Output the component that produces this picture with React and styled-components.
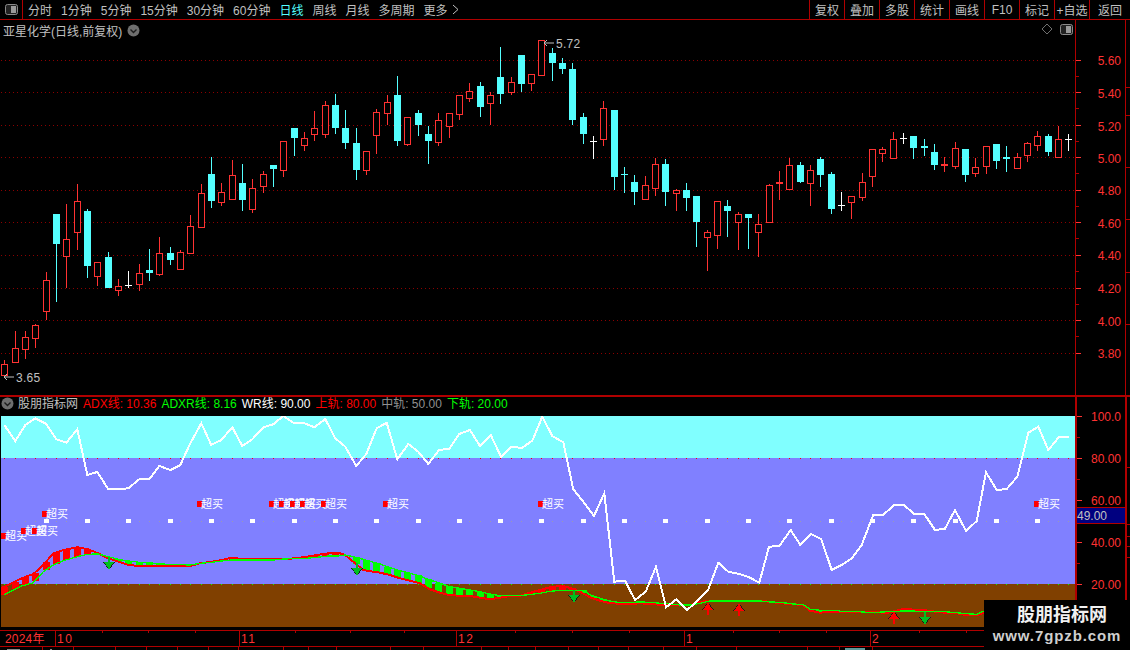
import React from 'react'
import styled, { createGlobalStyle } from 'styled-components'

const RED = '#ff3232'
const LINE = '#b00000'
const GRAY = '#c0c0c0'
const CYAN = '#54ffff'
const FONT = '"Liberation Sans", "Noto Sans CJK SC", sans-serif'

const GlobalStyle = createGlobalStyle`
  html, body { margin: 0; padding: 0; background: #000; }
  body { font-family: ${FONT}; overflow: hidden; }
`

const Page = styled.div`
  position: relative;
  width: 1130px;
  height: 650px;
  overflow: hidden;
  background: #000;
  color: ${GRAY};
  font-size: 12px;
`

/* top toolbar */
const Toolbar = styled.div`
  display: flex;
  align-items: stretch;
  height: 19px;
  border-bottom: 1px solid ${LINE};
`
const IconCell = styled.div`
  display: flex;
  align-items: center;
  justify-content: center;
  width: 22px;
  border-right: 1px solid ${LINE};
`
const Periods = styled.div`
  display: flex;
  align-items: center;
  gap: 9px;
  padding-left: 5px;
`
const Period = styled.span`
  display: flex;
  align-items: center;
  gap: 4px;
  color: ${(p) => (p.$active ? CYAN : GRAY)};
  white-space: nowrap;
`
const Actions = styled.div`
  display: flex;
  margin-left: auto;
`
const Action = styled.div`
  display: flex;
  align-items: center;
  justify-content: center;
  width: ${(p) => p.$w || 35}px;
  box-sizing: border-box;
  border-left: 1px solid ${LINE};
  white-space: nowrap;
`

/* panes */
const PricePane = styled.div`
  display: flex;
  height: 375px;
  border-bottom: 2px solid ${LINE};
`
const ChartCol = styled.div`
  position: relative;
  width: 1075px;
`
const PriceAxis = styled.div`
  width: 49px;
  border-left: 1px solid ${LINE};
  border-right: 1px solid ${LINE};
`
const LowerPane = styled.div`
  display: flex;
  height: 230px;
`
const IndicatorAxis = styled.div`
  width: 48px;
  border-left: 2px solid ${LINE};
  border-right: 2px solid ${LINE};
`
const Plot = styled.svg`
  display: block;
  font-family: ${FONT};
`
const TitleBar = styled.div`
  position: absolute;
  top: 1px;
  left: 3px;
  display: flex;
  align-items: center;
  gap: 5px;
  height: 18px;
  font-size: 12px;
`
const CornerTools = styled.div`
  position: absolute;
  top: 3px;
  right: 2px;
  display: flex;
  align-items: center;
  gap: 7px;
`
const LegendRow = styled.div`
  display: flex;
  align-items: flex-start;
  gap: 5px;
  height: 19px;
  padding-left: 1px;
  line-height: 15px;
  white-space: nowrap;
`
const LegendName = styled.span`
  margin-left: -1px;
`
const LegendItem = styled.span`
  color: ${(p) => p.$color};
`
const Watermark = styled.div`
  position: absolute;
  right: 0;
  bottom: 0;
  display: flex;
  flex-direction: column;
  align-items: center;
  width: 146px;
  height: 50px;
  padding-top: 4px;
  box-sizing: border-box;
  background: #000;
`
const MarkName = styled.div`
  margin-left: 10px;
  font-size: 18px;
  font-weight: 700;
  line-height: 22px;
  color: #f0f0f0;
`
const MarkUrl = styled.div`
  font-size: 15px;
  font-weight: 700;
  line-height: 20px;
  letter-spacing: 0.9px;
  color: #cfcfcf;
`

/* data: y values were read at 3x, so each block is scaled back to page px */
const rows = (oy, list) =>
  list.map(([k, hi, top, bot, lo]) => [k, oy + hi / 3, oy + top / 3, oy + bot / 3, oy + lo / 3])
const pts = (ox, oy, list) => list.map(([x, y]) => [ox + x / 3, oy + y / 3])
const candleX = (i) => Math.round(4.33 + 10.33 * i)

const CANDLES = [
  ...rows(140, [
    ['r', 660, 673, 704, 712], ['r', 573, 625, 665, 665], ['r', 573, 592, 626, 656], ['r', 552, 556, 593, 623],
    ['r', 396, 421, 512, 540], ['c', 222, 222, 312, 486], ['r', 192, 298, 347, 443], ['r', 132, 184, 275, 330],
    ['c', 207, 213, 378, 414], ['r', 366, 367, 407, 438], ['c', 336, 351, 444, 444], ['r', 418, 439, 449, 468],
    ['w', 393, 434, 434, 444], ['r', 372, 400, 431, 453], ['c', 327, 390, 399, 423], ['r', 291, 340, 401, 408],
    ['c', 321, 339, 360, 375], ['r', 330, 337, 386, 386], ['r', 225, 259, 338, 338], ['r', 132, 160, 260, 260],
    ['c', 51, 102, 183, 204], ['r', 129, 157, 185, 198], ['r', 60, 106, 176, 176], ['c', 72, 129, 180, 213],
    ['r', 117, 145, 206, 219], ['r', 94, 103, 137, 159], ['c', 75, 75, 87, 141],
  ]),
  ...rows(30, [
    ['r', 334, 334, 419, 441], ['c', 294, 294, 324, 378], ['r', 306, 325, 345, 363], ['r', 243, 295, 312, 333],
    ['r', 213, 226, 311, 324], ['c', 192, 225, 294, 312], ['c', 240, 294, 339, 357], ['c', 294, 339, 420, 450],
    ['r', 364, 364, 419, 435], ['r', 237, 247, 315, 372], ['r', 195, 217, 248, 285], ['c', 138, 195, 333, 348],
    ['r', 262, 262, 341, 348], ['c', 240, 249, 285, 318], ['c', 288, 312, 333, 402], ['r', 249, 271, 335, 348],
    ['r', 250, 250, 287, 324], ['r', 195, 195, 251, 270], ['r', 159, 184, 203, 216], ['c', 156, 168, 231, 261],
    ['r', 186, 196, 218, 285], ['c', 51, 141, 192, 222], ['r', 141, 157, 185, 195], ['c', 75, 75, 162, 186],
    ['r', 133, 133, 158, 183], ['r', 30, 31, 134, 138], ['c', 54, 69, 99, 153], ['c', 84, 99, 117, 132],
    ['c', 99, 117, 270, 285], ['c', 250, 261, 312, 342], ['w', 318, 334, 334, 387], ['r', 213, 235, 326, 348],
    ['c', 240, 240, 441, 480], ['c', 411, 433, 433, 489], ['c', 435, 456, 486, 525], ['r', 438, 466, 506, 506],
    ['r', 384, 403, 473, 498], ['c', 387, 402, 486, 528], ['r', 477, 481, 488, 543], ['c', 459, 480, 504, 543],
    ['c', 498, 498, 576, 651], ['r', 600, 607, 620, 723], ['r', 514, 514, 614, 657], ['c', 510, 528, 543, 621],
    ['r', 546, 553, 575, 660], ['c', 552, 552, 564, 657], ['r', 552, 583, 605, 681], ['r', 462, 466, 575, 575],
    ['R', 423, 457, 461, 510],
  ]),
  ...rows(120, [
    ['r', 114, 135, 206, 206], ['c', 126, 135, 186, 189], ['r', 135, 151, 188, 258], ['c', 111, 117, 165, 201],
    ['c', 156, 162, 267, 282], ['w', 216, 256, 256, 273], ['r', 229, 229, 245, 297], ['r', 159, 186, 231, 243],
    ['r', 87, 88, 167, 201], ['r', 81, 88, 98, 126], ['r', 36, 58, 113, 113], ['w', 39, 55, 55, 72],
    ['c', 48, 48, 84, 117], ['c', 57, 78, 83, 108], ['c', 72, 96, 135, 150], ['R', 112, 133, 137, 156],
    ['r', 66, 85, 137, 147], ['c', 87, 87, 165, 186], ['r', 114, 142, 158, 171], ['r', 79, 79, 137, 162],
    ['c', 72, 72, 123, 147], ['c', 78, 112, 116, 156], ['r', 99, 112, 143, 147], ['r', 66, 70, 104, 126],
    ['r', 33, 49, 74, 93], ['c', 42, 48, 96, 108], ['r', 18, 58, 110, 110], ['w', 42, 58, 58, 93],
  ]),
]

const PRICE_GRID = [
  [60, '5.60'], [92.5, '5.40'], [125.5, '5.20'], [157.5, '5.00'], [190, '4.80'],
  [222.5, '4.60'], [255, '4.40'], [288, '4.20'], [320.5, '4.00'], [353, '3.80'],
]

const WR = [
  ...pts(0, 380, [
    [13, 135], [46, 183], [76, 135], [106, 115], [139, 132], [169, 178], [199, 188], [232, 148], [262, 285],
    [292, 276], [325, 328], [355, 328], [385, 325], [418, 298], [448, 298], [478, 258], [511, 270], [541, 255],
    [571, 190], [604, 130], [634, 195], [664, 180], [697, 142], [727, 198], [757, 178], [790, 142], [820, 133],
    [850, 108], [880, 128], [910, 128], [943, 142], [976, 117], [1006, 175], [1036, 200], [1069, 258], [1099, 222],
  ]),
  ...pts(370, 410, [
    [20, 55], [50, 38], [82, 148], [115, 102], [145, 125], [175, 162], [207, 120], [238, 116], [268, 72], [300, 60],
    [330, 108], [362, 75], [393, 140], [425, 110], [455, 114], [487, 92], [517, 20], [547, 78], [580, 97], [610, 238],
    [642, 278], [672, 318], [703, 250],
  ]),
  ...pts(380, 500, [
    [703, 245], [735, 242], [765, 300], [797, 275], [828, 200], [858, 322], [889, 298], [922, 330], [952, 302],
    [985, 268], [1015, 188], [1045, 215], [1078, 222], [1108, 232], [1138, 248],
  ]),
  ...pts(760, 480, [
    [27, 200], [58, 198], [92, 150], [121, 195], [154, 162], [184, 178], [215, 270], [245, 255], [275, 235], [305, 195],
    [340, 104], [370, 104], [402, 76], [433, 76], [463, 102], [493, 102], [525, 150], [555, 146], [585, 90], [618, 153],
  ]),
  ...pts(960, 385, [
    [50, 408], [78, 262], [110, 315], [140, 312], [172, 275], [205, 143], [235, 125], [265, 195], [298, 155], [328, 155],
  ]),
]

const ADX = [
  ...pts(0, 500, [
    [3, 265], [35, 250], [65, 235], [100, 222], [130, 195], [160, 160], [190, 150], [232, 142], [262, 147], [295, 160],
    [325, 175], [355, 185], [385, 195], [418, 198], [570, 198], [600, 190], [635, 185], [665, 180], [695, 173], [727, 177],
    [850, 177], [885, 175], [920, 170], [950, 165], [985, 160], [1015, 158], [1035, 165], [1060, 185], [1090, 210], [1120, 215],
  ]),
  ...pts(380, 500, [
    [0, 218], [30, 225], [60, 235], [90, 242], [120, 250], [150, 268], [180, 278], [210, 286], [270, 288], [300, 293],
    [330, 298], [360, 293], [390, 288], [420, 287], [445, 280], [480, 270], [510, 262], [545, 257], [575, 265], [600, 275],
    [630, 292], [660, 302], [690, 310], [750, 312], [780, 310], [810, 312], [840, 314], [930, 316], [960, 305], [990, 303], [1140, 303],
  ]),
  ...pts(760, 480, [
    [30, 365], [60, 370], [100, 372], [130, 376], [150, 392], [180, 398], [215, 395], [300, 396], [385, 398], [430, 387],
    [495, 391], [540, 397], [590, 400], [620, 406], [650, 406], [672, 398],
  ]),
]

const ADXR = [
  ...pts(0, 500, [
    [12, 285], [35, 272], [65, 258], [100, 248], [130, 215], [160, 195], [190, 182], [232, 170], [262, 163], [295, 162],
    [325, 170], [355, 178], [385, 183], [418, 187], [448, 188], [480, 192], [570, 195], [600, 190], [635, 187], [665, 183],
    [695, 180], [820, 180], [850, 177], [920, 175], [950, 172], [985, 168], [1015, 168], [1035, 165], [1060, 170], [1090, 178], [1120, 187],
  ]),
  ...pts(380, 500, [
    [0, 192], [30, 203], [60, 212], [90, 220], [120, 228], [150, 240], [180, 250], [210, 260], [240, 265], [270, 270],
    [300, 275], [330, 282], [360, 287], [420, 287], [445, 284], [480, 280], [510, 274], [545, 271], [612, 271], [630, 285],
    [660, 295], [690, 303], [720, 308], [780, 306], [810, 307], [840, 310], [870, 312], [900, 315], [930, 315], [960, 310], [990, 303], [1140, 303],
  ]),
  ...pts(760, 480, [
    [30, 366], [60, 367], [100, 372], [130, 374], [150, 388], [180, 391], [230, 391], [245, 395], [300, 395], [330, 398],
    [385, 395], [430, 393], [495, 394], [540, 394], [590, 398], [620, 401], [650, 403], [672, 393],
  ]),
]

const yAt = (line, x) => {
  for (let i = 1; i < line.length; i++) {
    const [x0, y0] = line[i - 1]
    const [x1, y1] = line[i]
    if (x >= x0 && x <= x1) return y0 + ((y1 - y0) * (x - x0)) / Math.max(x1 - x0, 0.01)
  }
  return line[line.length - 1][1]
}

const OVERBOUGHT = [
  [42, 514], [1, 536], [21, 530.5], [32, 530.5], [197, 504], [269, 504], [279, 504], [290, 504],
  [300, 504], [321, 504], [383, 504], [538, 504], [1034, 504],
]
const DOWN_ARROWS = [[109, 557], [357, 563], [574, 590], [925, 612]]
const UP_ARROWS = [[708, 603], [739, 604], [894, 612]]

const MONTHS = [[57, '10'], [241, '11'], [458, '12'], [686, '1'], [872, '2']]
const DAY_TICKS = [102, 148, 195, 295, 350, 404, 515, 572, 629, 733, 779, 826, 919, 966]
const LOW_TICKS = [42, 73, 115, 146, 177, 208, 238, 283, 308, 336, 390, 423, 481, 508, 535, 568, 598, 628, 663, 696, 736, 807, 839, 872]
const UPPER_STRIP = [20, 30, 45, 57, 92, 125, 157, 190, 222, 255, 288, 320, 353]
const LOWER_STRIP = [423, 437, 458, 500, 532, 552, 569, 587]

const toPoints = (line) => line.map(([x, y]) => `${x.toFixed(1)},${y.toFixed(1)}`).join(' ')

function Candle({ data, i }) {
  const [kind, hi, top, bot, lo] = data
  const x = candleX(i)
  const color = kind === 'w' ? '#ffffff' : kind === 'c' ? CYAN : RED
  const y0 = Math.round(top)
  const y1 = Math.round(bot)
  const wick = <rect x={x} y={Math.round(hi)} width="1" height={Math.max(Math.round(lo) - Math.round(hi), 1)} fill={color} />
  const flat = y1 - y0 < 2
  return (
    <g>
      {wick}
      {flat || kind === 'R' ? (
        <rect x={x - 3} y={y0} width="7" height={Math.max(y1 - y0, 1)} fill={color} />
      ) : kind === 'c' ? (
        <rect x={x - 3} y={y0} width="7" height={y1 - y0} fill={color} />
      ) : (
        <rect x={x - 2.5} y={y0 + 0.5} width="6" height={y1 - y0} fill="#000" stroke={color} />
      )}
    </g>
  )
}

function SplitIcon() {
  return (
    <svg width="13" height="11" viewBox="0 0 13 11">
      <rect x="0.5" y="0.5" width="12" height="10" rx="2" fill="#222" stroke="#8a8a8a" />
      <rect x="6" y="2" width="5" height="7" fill="#9a9a9a" />
    </svg>
  )
}

function ChevronBadge() {
  return (
    <svg width="13" height="13" viewBox="0 0 13 13">
      <circle cx="6.5" cy="6.5" r="6" fill="#6e6e6e" />
      <path d="M3.5 5.5 L6.5 8.5 L9.5 5.5" fill="none" stroke="#1c1c1c" strokeWidth="1.4" />
    </svg>
  )
}

function ExtremeNote({ x, y, label }) {
  return (
    <g>
      <path d={`M${x + 11} ${y} H${x + 1} M${x + 4} ${y - 3} L${x + 1} ${y} L${x + 4} ${y + 3}`} fill="none" stroke={GRAY} />
      <text x={x + 13} y={y + 5} fontSize="12" fill={GRAY} letterSpacing="0.3">{label}</text>
    </g>
  )
}

function PriceChart() {
  return (
    <Plot width="1075" height="375" viewBox="0 20 1075 375">
      <g shapeRendering="crispEdges">
        {PRICE_GRID.map(([y]) => (
          <line key={y} x1="1" x2="1075" y1={Math.floor(y) + 0.5} y2={Math.floor(y) + 0.5} stroke="#8c0000" strokeDasharray="1 3" />
        ))}
        {CANDLES.map((c, i) => <Candle key={i} data={c} i={i} />)}
      </g>
      <ExtremeNote x={3} y={377} label="3.65" />
      <ExtremeNote x={543} y={43} label="5.72" />
    </Plot>
  )
}

function PriceScale() {
  return (
    <Plot width="49" height="375" viewBox="1076 20 49 375">
      {PRICE_GRID.map(([y, label], n) => (
        <g key={label}>
          <rect x="1076" y={Math.floor(y)} width="5" height="1" fill={RED} />
          {n < 9 && <rect x="1076" y={Math.floor(y + 16)} width="3" height="1" fill={LINE} />}
          <text x="1121" y={y + 5} fontSize="12" fill={RED} textAnchor="end">{label}</text>
        </g>
      ))}
    </Plot>
  )
}

function StripTicks({ top, height, marks }) {
  return (
    <Plot width="5" height={height} viewBox={`0 ${top} 5 ${height}`} shapeRendering="crispEdges">
      {marks.map((y) => <rect key={y} x="0" y={y} width="5" height="1" fill={LINE} />)}
    </Plot>
  )
}

function Arrow({ x, y, up }) {
  const color = up ? '#ff0000' : '#00c020'
  // head base stays on one row, the dark copy only shows along the slanted edges
  const head = (d) =>
    up
      ? `${x - 5 - d},${y + 7} ${x},${y - d} ${x + 5 + d},${y + 7}`
      : `${x - 5 - d},${y + 5} ${x},${y + 12 + d} ${x + 5 + d},${y + 5}`
  return (
    <g>
      <polygon points={head(1)} fill="#1a1a1a" />
      <polygon points={head(0)} fill={color} />
      <rect x={x - 1} y={y} width="2" height="12" fill={color} />
    </g>
  )
}

function IndicatorChart() {
  const candles = CANDLES.map((_, i) => candleX(i))
  return (
    <Plot width="1075" height="211" viewBox="0 416 1075 211">
      <g shapeRendering="crispEdges">
        <rect x="1" y="416" width="1074" height="42" fill="#80ffff" />
        <rect x="1" y="458" width="1074" height="126" fill="#8080ff" />
        <rect x="1" y="584" width="1074" height="43" fill="#804000" />
        {candles.map((x) => (
          <g key={x}>
            <rect x={x} y="458" width="1" height="1" fill="#ff0000" />
            <rect x={x} y="584" width="1" height="1" fill="#00ff00" />
            <rect x={x} y="521" width="1" height="1" fill="#9a9ab4" />
          </g>
        ))}
        {candles.filter((_, i) => i > 0 && i % 4 === 0).map((x) => (
          <rect key={x} x={x - 2} y="519" width="5" height="4" fill="#fff" />
        ))}
        {candles.map((x) => {
          const a = yAt(ADX, x)
          const b = yAt(ADXR, x)
          if (Math.abs(a - b) < 1.5) return null
          return (
            <rect key={x} x={x - 3} y={Math.min(a, b)} width="7" height={Math.abs(a - b)} fill={a < b ? '#ff0000' : '#00ff00'} />
          )
        })}
        <polyline points={toPoints(ADX)} fill="none" stroke="#ff0000" strokeWidth="2" />
        <polyline points={toPoints(ADXR)} fill="none" stroke="#00ff00" strokeWidth="1.3" />
        <polyline points={toPoints(WR)} fill="none" stroke="#ffffff" strokeWidth="2" />
        {DOWN_ARROWS.map(([x, y]) => <Arrow key={x} x={x} y={y} />)}
        {UP_ARROWS.map(([x, y]) => <Arrow key={x} x={x} y={y} up />)}
      </g>
      {OVERBOUGHT.map(([x, y], i) => (
        <g key={i}>
          <rect x={x} y={y - 3} width="5" height="6" fill="#ff0000" shapeRendering="crispEdges" />
          <text x={x + 4} y={y + 4} fontSize="11" fill="#fff">超买</text>
        </g>
      ))}
    </Plot>
  )
}

function IndicatorScale() {
  const major = [[416, '100.0'], [458, '80.00'], [500, '60.00'], [542, '40.00'], [584, '20.00']]
  return (
    <Plot width="48" height="230" viewBox="1077 397 48 230">
      {major.map(([y, label]) => (
        <g key={y}>
          <rect x="1077" y={y} width="5" height="1" fill={RED} />
          <rect x="1077" y={y + 21} width="3" height="1" fill={LINE} />
          <text x="1091" y={y + 5} fontSize="12" fill={RED}>{label}</text>
        </g>
      ))}
      <rect x="1077" y="508" width="48" height="15" fill="#000080" />
      <rect x="1077" y="507" width="48" height="1" fill={LINE} />
      <rect x="1077" y="523" width="48" height="1" fill={LINE} />
      <text x="1077" y="519.5" fontSize="12" fill={GRAY}>49.00</text>
    </Plot>
  )
}

function DateAxis() {
  return (
    <Plot width="1130" height="23" viewBox="0 627 1130 23">
      <g shapeRendering="crispEdges">
        <rect x="0" y="630" width="1130" height="1" fill={LINE} />
        <rect x="0" y="646" width="1130" height="1" fill={LINE} />
        {MONTHS.map(([x]) => <rect key={x} x={x - 2} y="631" width="1" height="15" fill={LINE} />)}
        {DAY_TICKS.map((x) => <rect key={x} x={x} y="631" width="1" height="2" fill={LINE} />)}
        {LOW_TICKS.map((x) => <rect key={x} x={x} y="647" width="1" height="3" fill={LINE} />)}
        <rect x="7" y="649" width="13" height="1" fill="#8a8a8a" />
        <rect x="50" y="649" width="2" height="1" fill="#8a8a8a" />
        <rect x="845" y="648" width="20" height="2" fill="#5f9a9a" />
      </g>
      <text x="5" y="643" fontSize="12" fill={RED} letterSpacing="0.2">2024年</text>
      {MONTHS.map(([x, label]) => (
        <text key={x} x={x} y="643" fontSize="12" fill={RED} letterSpacing="1.5">{label}</text>
      ))}
    </Plot>
  )
}

const PERIODS = ['分时', '1分钟', '5分钟', '15分钟', '30分钟', '60分钟', '日线', '周线', '月线', '多周期']
const ACTIONS = ['复权', '叠加', '多股', '统计', '画线', 'F10', '标记', '+自选']

export default function App() {
  return (
    <Page>
      <GlobalStyle />
      <Toolbar>
        <IconCell><SplitIcon /></IconCell>
        <Periods>
          {PERIODS.map((p) => <Period key={p} $active={p === '日线'}>{p}</Period>)}
          <Period>
            更多
            <svg width="7" height="11" viewBox="0 0 7 11">
              <path d="M1 1 L6 5.5 L1 10" fill="none" stroke={GRAY} />
            </svg>
          </Period>
        </Periods>
        <Actions>
          {ACTIONS.map((a) => <Action key={a}>{a}</Action>)}
          <Action $w={41}>返回</Action>
        </Actions>
      </Toolbar>

      <PricePane>
        <ChartCol>
          <PriceChart />
          <TitleBar>
            亚星化学(日线,前复权)
            <ChevronBadge />
          </TitleBar>
          <CornerTools>
            <svg width="12" height="12" viewBox="0 0 12 12">
              <path d="M6 1 L11 6 L6 11 L1 6 Z" fill="none" stroke="#707070" />
            </svg>
            <SplitIcon />
          </CornerTools>
        </ChartCol>
        <PriceAxis><PriceScale /></PriceAxis>
        <StripTicks top={20} height={375} marks={UPPER_STRIP} />
      </PricePane>

      <LowerPane>
        <div>
          <LegendRow>
            <ChevronBadge />
            <LegendName>股朋指标网</LegendName>
            <LegendItem $color="#ff0000">ADX线: 10.36</LegendItem>
            <LegendItem $color="#00ff00">ADXR线: 8.16</LegendItem>
            <LegendItem $color="#ffffff">WR线: 90.00</LegendItem>
            <LegendItem $color="#ff0000">上轨: 80.00</LegendItem>
            <LegendItem $color="#909090">中轨: 50.00</LegendItem>
            <LegendItem $color="#00ff00">下轨: 20.00</LegendItem>
          </LegendRow>
          <IndicatorChart />
        </div>
        <IndicatorAxis><IndicatorScale /></IndicatorAxis>
        <StripTicks top={397} height={230} marks={LOWER_STRIP} />
      </LowerPane>

      <DateAxis />

      <Watermark>
        <MarkName>股朋指标网</MarkName>
        <MarkUrl>www.7gpzb.com</MarkUrl>
      </Watermark>
    </Page>
  )
}
